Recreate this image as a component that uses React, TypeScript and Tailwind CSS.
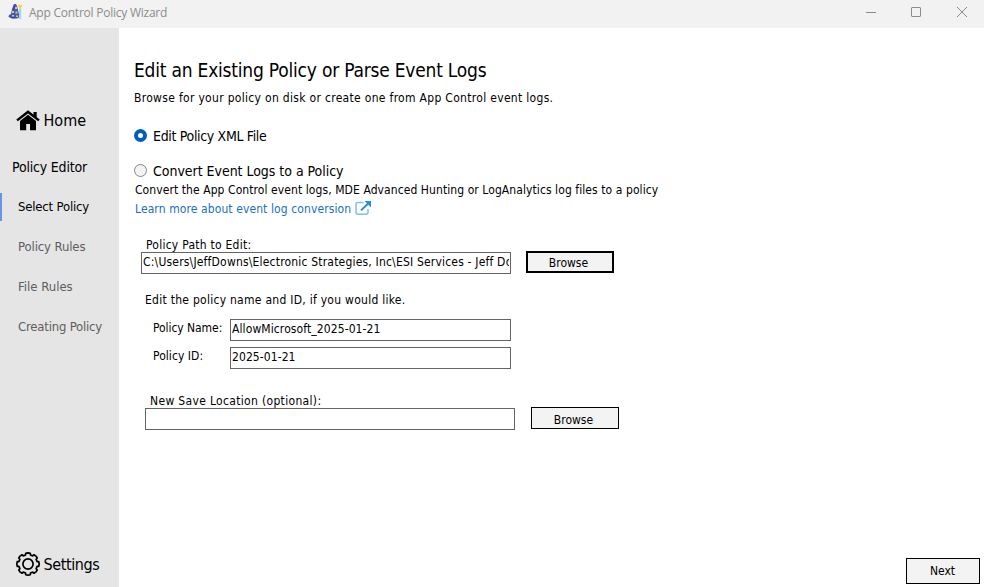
import type { ReactNode } from "react";

function WizardHatIcon() {
  return (
    <svg width="15" height="17" viewBox="0 0 15 17" className="block shrink-0">
      <path d="M6 1h2l1 2 1 4 1 4 1 3-3 1.400H4L0.500 14 1 12l2-1 1-5z" fill="#3f58cf" />
      <path d="M5 6l1-4 1 1-1 4zM1 13l3 1 5 .4-4 1z" fill="#2a3c9c" />
      <path d="M7 4h2v2H7zM4 8h2v2H4zM7.500 8.500h2v2h-2zM4 12h2v1.500H4zM8 12.500h2v1.500H8z" fill="#f3c832" />
      <path d="M11 5.500h2.200V16H11z" fill="#a5d6f4" />
      <path d="M10 1.500l2 .8 2.500-.8-.8 2.500-1.700 2-1.500-2z" fill="#fbd22f" />
    </svg>
  );
}

function HomeIcon() {
  return (
    <svg width="24" height="21" viewBox="0 0 24 21" className="block shrink-0">
      <path d="M17.500 2h3.200v6l-3.200-2.700z" />
      <path d="M12 0.200L0.300 9.400l1.500 1.900L12 3.400l10.200 7.900 1.500-1.900z" />
      <path d="M12 4.700L4 10.900v9.300h6.200V14h3.800v6.200h6v-9.300z" />
    </svg>
  );
}

const gearPoints = Array.from({ length: 8 }, (_, i) => {
  const point = (radius: number, degrees: number) => {
    const angle = ((i * 45 + degrees) * Math.PI) / 180;
    return `${(12 + radius * Math.sin(angle)).toFixed(2)},${(12 - radius * Math.cos(angle)).toFixed(2)}`;
  };
  return [point(9.4, -15), point(11, -12), point(11.2, 0), point(11, 12), point(9.4, 15)].join(" ");
}).join(" ");

function GearIcon() {
  return (
    <svg width="24" height="24" viewBox="0 0 24 24" fill="none" stroke="#000" strokeWidth="1.7" strokeLinejoin="round" className="block shrink-0">
      <polygon points={gearPoints} />
      <circle cx="12" cy="12" r="5.1" />
    </svg>
  );
}

function ExternalLinkIcon() {
  return (
    <svg width="17" height="15" viewBox="0 0 17 15" fill="none" className="block shrink-0">
      <path d="M8.500 1.500H3Q1 1.500 1 3.500v7.700q0 2 2 2h8q2 0 2-2V8" stroke="#7fbdec" strokeWidth="1.500" />
      <path d="M6 9.400L13.500 2.200" stroke="#2b8cd8" strokeWidth="2" />
      <path d="M9.500 0H16v6.500z" fill="#2b8cd8" />
    </svg>
  );
}

function TitleBar() {
  return (
    <header className="flex h-7 shrink-0 items-start bg-[#f2f2f2] pl-2">
      <div className="mt-[3px]">
        <WizardHatIcon />
      </div>
      <h1 className="mt-[5px] ml-1.5 font-['Open_Sans',sans-serif] text-xs leading-4 tracking-[-0.24px] whitespace-nowrap text-[#8c8c8c]">
        App Control Policy Wizard
      </h1>
      <svg width="104" height="12" viewBox="0 0 104 12" fill="none" stroke="#8c8c8c" className="mt-1.5 mr-3.5 ml-auto block">
        <path d="M0 6.500h10" />
        <rect x="45.500" y="1.500" width="9" height="9" rx="0.500" />
        <path d="M91 1l10 10M101 1L91 11" />
      </svg>
    </header>
  );
}

function NavItem({ active, children }: { active?: boolean; children: ReactNode }) {
  return (
    <li
      className={`h-7 border-l-2 pt-1.5 pl-4 text-[13px] leading-4 whitespace-nowrap ${
        active ? "border-[#6a93ea] text-black" : "border-transparent text-[#5e5e5e]"
      }`}
    >
      {children}
    </li>
  );
}

function Sidebar() {
  return (
    <nav className="flex w-[119px] shrink-0 flex-col bg-[#e5e5e5] pt-[82px]">
      <div className="flex pl-4">
        <HomeIcon />
        <span className="ml-[3.5px] text-base leading-[21px]">Home</span>
      </div>
      <div className="mt-[26px] pl-3 text-sm leading-5 tracking-[-0.19px]">Policy Editor</div>
      <ul className="mt-4 flex flex-col gap-3">
        <NavItem active>
          <span className="tracking-[-0.18px]">Select Policy</span>
        </NavItem>
        <NavItem>
          <span className="tracking-[-0.12px]">Policy Rules</span>
        </NavItem>
        <NavItem>File Rules</NavItem>
        <NavItem>
          <span className="tracking-[-0.2px]">Creating Policy</span>
        </NavItem>
      </ul>
      <div className="mt-auto flex pb-[11px] pl-4">
        <GearIcon />
        <span className="mt-0.5 ml-[3.500px] text-base leading-[21px] tracking-[-0.4px]">Settings</span>
      </div>
    </nav>
  );
}

function Radio({ checked }: { checked?: boolean }) {
  return (
    <span
      className={`mt-[3px] block size-[13px] shrink-0 rounded-full ${
        checked ? "border-4 border-[#005fb8] bg-white" : "border border-[#868686] bg-[#f3f3f3]"
      }`}
    />
  );
}

function TextBox({ className, children }: { className: string; children?: ReactNode }) {
  return (
    <div className={`h-[22px] shrink-0 border border-[#646464] bg-white px-px pt-px ${className}`}>
      <div className="overflow-hidden leading-4 whitespace-nowrap">{children}</div>
    </div>
  );
}

export default function App() {
  return (
    <div className="flex h-screen w-screen flex-col overflow-hidden bg-white font-['DejaVu_Sans_Condensed','DejaVu_Sans',sans-serif] text-black">
      <TitleBar />
      <div className="flex min-h-0 flex-1">
        <Sidebar />
        <main className="flex flex-1 flex-col pt-[30px] pl-[15px] text-xs leading-4 whitespace-nowrap">
          <h2 className="text-[19px] leading-6 tracking-[-0.21px]">Edit an Existing Policy or Parse Event Logs</h2>
          <p className="mt-2 tracking-[0.31px]">
            Browse for your policy on disk or create one from App Control event logs.
          </p>

          <div className="mt-5 flex text-sm leading-5">
            <Radio checked />
            <span className="ml-1.5 tracking-[-0.33px]">Edit Policy XML File</span>
          </div>
          <div className="mt-[15px] flex text-sm leading-5">
            <Radio />
            <span className="ml-1.5 tracking-[-0.03px]">Convert Event Logs to a Policy</span>
          </div>
          <p className="mt-px pl-px tracking-[0.08px]">
            Convert the App Control event logs, MDE Advanced Hunting or LogAnalytics log files to a policy
          </p>
          <div className="mt-[3px] flex pl-px text-[#1a6fc0]">
            <span className="tracking-[0.1px]">Learn more about event log conversion</span>
            <span className="ml-1">
              <ExternalLinkIcon />
            </span>
          </div>

          <div className="mt-5 h-3.5 pl-3 tracking-[0.25px]">Policy Path to Edit:</div>
          <div className="flex items-start pl-[7px]">
            <TextBox className="mt-px w-[370px] tracking-[0.19px]">
              {"C:\\Users\\JeffDowns\\Electronic Strategies, Inc\\ESI Services - Jeff Do"}
            </TextBox>
            <button className="ml-[15px] h-[22px] w-[88px] border-2 border-black bg-[#f3f3f3] pt-0.5 pr-[3px] leading-4">
              Browse
            </button>
          </div>

          <p className="mt-[18px] pl-[11px] tracking-[0.27px]">Edit the policy name and ID, if you would like.</p>
          <div className="mt-[11px] flex pl-[19px]">
            <span className="w-[77px] pt-px tracking-[-0.06px]">Policy Name:</span>
            <TextBox className="w-[281px] tracking-[0.1px]">AllowMicrosoft_2025-01-21</TextBox>
          </div>
          <div className="mt-1.5 flex pl-[19px]">
            <span className="w-[77px] pt-px tracking-[0.06px]">Policy ID:</span>
            <TextBox className="w-[281px] tracking-[0.08px]">2025-01-21</TextBox>
          </div>

          <div className="mt-6 h-3.5 pl-4 tracking-[0.33px]">New Save Location (optional):</div>
          <div className="flex items-start pl-[11px]">
            <TextBox className="mt-px w-[370px]" />
            <button className="ml-4 h-[22px] w-[88px] border border-black bg-[#f3f3f3] pt-1 pr-[3px] leading-4">
              Browse
            </button>
          </div>

          <button className="mt-auto mr-1 mb-[3px] h-[26px] w-[74px] self-end border border-black bg-[#f3f3f3] pr-px pb-px leading-4">
            Next
          </button>
        </main>
      </div>
    </div>
  );
}
